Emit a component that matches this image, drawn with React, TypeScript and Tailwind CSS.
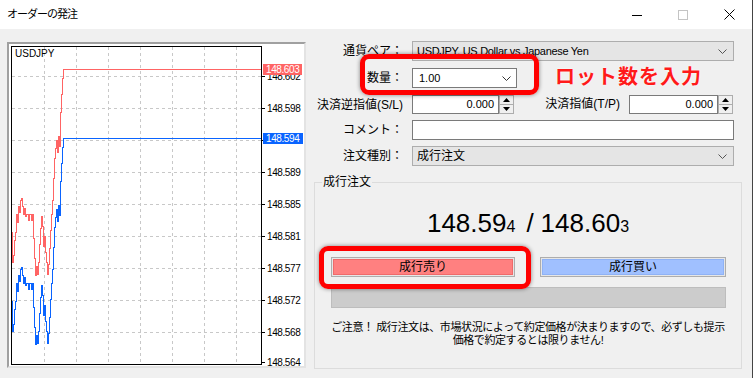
import React from "react";

type Pt = [number, number];

// tick-chart steps for the ask line; the bid line is the same shape 69px lower
const askSteps: Pt[] = [
  [11.5, 176], [11.5, 232], [12.5, 262], [13.5, 255], [14.5, 240], [15.5, 232],
  [16.5, 214], [17.5, 222], [18.5, 206], [19.5, 212], [20.5, 200], [21.5, 198],
  [22.5, 206], [23.5, 214], [24.5, 208], [25.5, 216], [26.5, 214], [28.5, 220],
  [29.5, 214], [31.5, 220], [32.5, 214], [33.5, 238], [34.5, 258], [35.5, 275],
  [36.5, 266], [37.5, 274], [38.5, 262], [39.5, 244], [40.5, 228], [41.5, 216],
  [42.5, 226], [43.5, 246], [44.5, 236], [45.5, 252], [46.5, 262], [47.5, 274],
  [48.5, 264], [49.5, 248], [50.5, 230], [51.5, 214], [52.5, 200], [53.5, 178],
  [54.5, 158], [55.5, 148], [56.5, 140], [57.5, 152], [58.5, 136], [59.5, 146],
  [60.5, 112], [61.5, 94], [62.5, 78], [63.5, 69.5],
];

function stepPath(steps: Pt[], dy: number) {
  let d = `M${steps[0][0]} ${steps[0][1] + dy}`;
  for (let i = 1; i < steps.length; i++) {
    d += ` H${steps[i][0]} V${steps[i][1] + dy}`;
  }
  return d + " H261";
}

const axis = [
  [76, "148.602"], [108, "148.598"], [140, "148.594"], [172, "148.589"],
  [204, "148.585"], [236, "148.581"], [268, "148.577"], [300, "148.572"],
  [332, "148.568"], [362, "148.564"],
] as const;

function Chart() {
  const vx = [44, 76, 108, 140, 172, 204, 236];
  const hy = [76, 108, 140, 172, 204, 236, 268, 300, 332];
  return (
    <svg width={295} height={322} viewBox="9 44 295 322" className="block">
      {vx.map((x) => (
        <line key={x} x1={x + 0.5} y1={47} x2={x + 0.5} y2={364} stroke="#c8c8c8" strokeDasharray="3 3" />
      ))}
      {hy.map((y) => (
        <line key={y} x1={12} y1={y + 0.5} x2={264} y2={y + 0.5} stroke="#c8c8c8" strokeDasharray="3 3" />
      ))}
      <path d={stepPath(askSteps, 0)} fill="none" stroke="#ff6464" shapeRendering="crispEdges" />
      <path d={stepPath(askSteps, 69)} fill="none" stroke="#0a64ff" shapeRendering="crispEdges" />
      <path d="M11.5 46.5 V364.5 H261.5 V46.5" fill="none" stroke="#000" shapeRendering="crispEdges" />
      <line x1={11} y1={46.5} x2={262} y2={46.5} stroke="#000" />
      {axis.map(([y, t]) => (
        <g key={t}>
          <line x1={262} y1={y + 0.5} x2={265} y2={y + 0.5} stroke="#000" />
          <text x={267} y={y + 3.5} fontSize={10} letterSpacing={-0.4} fontFamily="Liberation Sans, sans-serif" fill="#000">
            {t}
          </text>
        </g>
      ))}
      <text x={15} y={57} fontSize={10} fontFamily="Liberation Sans, sans-serif" fill="#000">
        USDJPY
      </text>
      <rect x={263} y={64} width={39} height={11} fill="#ff6464" />
      <text x={266} y={73} fontSize={10} letterSpacing={-0.4} fontFamily="Liberation Sans, sans-serif" fill="#fff">
        148.603
      </text>
      <rect x={263} y={133} width={40} height={11} fill="#0a64ff" />
      <text x={266} y={142} fontSize={10} letterSpacing={-0.4} fontFamily="Liberation Sans, sans-serif" fill="#fff">
        148.594
      </text>
    </svg>
  );
}

function Chevron({ color = "#333" }: { color?: string }) {
  return (
    <svg width="9" height="5" viewBox="0 0 9 5">
      <path d="M0.5 0.5 L4.5 4.5 L8.5 0.5" fill="none" stroke={color} />
    </svg>
  );
}

function Spinner() {
  return (
    <div className="flex h-full w-[15px] flex-col border border-[#adadad] bg-[#f0f0f0]">
      <div className="flex flex-1 items-center justify-center border-b border-[#adadad]">
        <svg width="7" height="4" viewBox="0 0 7 4"><path d="M3.5 0 L7 4 H0 Z" fill="#000" /></svg>
      </div>
      <div className="flex flex-1 items-center justify-center">
        <svg width="7" height="4" viewBox="0 0 7 4"><path d="M0 0 H7 L3.5 4 Z" fill="#000" /></svg>
      </div>
    </div>
  );
}

function Label({ children }: { children: React.ReactNode }) {
  return <div className="w-[89px] shrink-0 text-right text-[12px] leading-[20px] whitespace-nowrap">{children}</div>;
}

export default function App() {
  return (
    <div className="relative h-[378px] w-[753px] overflow-hidden border-r border-[#444] bg-[#f0f0f0] font-['Liberation_Sans','Noto_Sans_CJK_JP',sans-serif] text-black">
      {/* title bar */}
      <div className="flex h-[29px] items-center bg-white">
        <span className="pl-[7px] text-[11px] tracking-[-1px]">オーダーの発注</span>
        <div className="ml-auto flex h-full">
          <div className="flex w-[46px] items-center justify-center">
            <svg width="10" height="10" viewBox="0 0 10 10"><path d="M0 5.5 H10" stroke="#000" /></svg>
          </div>
          <div className="flex w-[46px] items-center justify-center">
            <svg width="10" height="10" viewBox="0 0 10 10"><rect x="0.5" y="0.5" width="9" height="9" fill="none" stroke="#c4c4c4" /></svg>
          </div>
          <div className="flex w-[46px] items-center justify-center">
            <svg width="11" height="11" viewBox="0 0 11 11"><path d="M0.5 0.5 L10.5 10.5 M10.5 0.5 L0.5 10.5" stroke="#000" /></svg>
          </div>
        </div>
      </div>

      <div className="flex">
        {/* chart */}
        <div className="ml-[7px] mt-[13px] h-[326px] w-[299px] border-2 border-[#a0a0a0] border-r-[#e3e3e3] border-b-[#e3e3e3] bg-white">
          <Chart />
        </div>

        {/* order form */}
        <div className="ml-[8px] flex w-[428px] flex-col">
          <div className="mt-[12px] flex h-[20px] items-center">
            <Label>通貨ペア：</Label>
            <div className="ml-[9px] flex h-full w-[322px] items-center justify-between border border-[#adadad] bg-[#e5e5e5] pl-[4px] pr-[6px] text-[11px] tracking-[-0.3px]">
              <span>USDJPY, US Dollar vs Japanese Yen</span>
              <Chevron color="#555" />
            </div>
          </div>

          <div className="mt-[7px] flex h-[20px] items-center">
            <Label>数量：</Label>
            <div className="ml-[9px] flex h-full w-[105px] items-center justify-between border border-[#7a7a7a] bg-white pl-[6px] pr-[5px] text-[11px]">
              <span>1.00</span>
              <Chevron />
            </div>
          </div>

          <div className="mt-[7px] flex h-[19px] items-center">
            <Label>決済逆指値(S/L)</Label>
            <div className="ml-[9px] flex h-full w-[87px] items-center justify-end border border-[#7a7a7a] bg-white pr-[4px] text-[11px]">0.000</div>
            <Spinner />
            <div className="w-[106px] text-right text-[12px] leading-[19px] whitespace-nowrap">決済指値(T/P)</div>
            <div className="ml-[9px] flex h-full w-[89px] items-center justify-end border border-[#7a7a7a] bg-white pr-[4px] text-[11px]">0.000</div>
            <Spinner />
          </div>

          <div className="mt-[6px] flex h-[20px] items-center">
            <Label>コメント：</Label>
            <div className="ml-[9px] h-full w-[322px] border border-[#7a7a7a] bg-white" />
          </div>

          <div className="mt-[6px] flex h-[20px] items-center">
            <Label>注文種別：</Label>
            <div className="ml-[9px] flex h-full w-[322px] items-center justify-between border border-[#adadad] bg-[#e5e5e5] pl-[4px] pr-[6px] text-[12px]">
              <span>成行注文</span>
              <Chevron color="#555" />
            </div>
          </div>

          <fieldset className="mt-[9px] h-[194px] w-[428px] border border-[#dcdcdc]">
            <legend className="ml-[7px] px-[1px] text-[12px] leading-[14px]">成行注文</legend>
            <div className="mt-[17px] flex h-[34px] items-baseline justify-center text-[26px] leading-[34px]">
              <span>148.59</span>
              <span className="text-[16px]">4</span>
              <span className="ml-[11px] mr-[7px]">/</span>
              <span>148.60</span>
              <span className="text-[16px]">3</span>
            </div>
            <div className="mt-[17px] flex pl-[16px]">
              <div className="h-[20px] w-[184px] border border-[#adadad] bg-[#e6e6e6] p-[1px]">
                <div className="flex h-full items-center justify-center border border-[#f06a6a] bg-[#ff8080] text-[12px]">成行売り</div>
              </div>
              <div className="ml-[25px] h-[20px] w-[186px] border border-[#adadad] bg-[#e6e6e6] p-[1px]">
                <div className="flex h-full items-center justify-center border border-[#8fb2f5] bg-[#a0c0ff] text-[12px]">成行買い</div>
              </div>
            </div>
            <div className="ml-[16px] mt-[10px] h-[21px] w-[395px] border border-[#bdbdbd] bg-[#cccccc]" />
            <div className="mt-[13px] text-center text-[11px] leading-[13px] tracking-[-0.4px]">
              ご注意！ 成行注文は、市場状況によって約定価格が決まりますので、必ずしも提示
              <br />
              価格で約定するとは限りません!
            </div>
          </fieldset>
        </div>
      </div>

      {/* annotations */}
      <div className="absolute left-[360px] top-[54px] h-[41px] w-[179px] rounded-[9px] border-[5px] border-[#ff0000] shadow-[0_0_4px_rgba(0,0,0,0.45)]" />
      <div className="absolute left-[319px] top-[246px] h-[43px] w-[212px] rounded-[9px] border-[5px] border-[#ff0000] shadow-[0_0_4px_rgba(0,0,0,0.45)]" />
      <div className="absolute left-[555px] top-[63px] text-[20px] font-bold leading-[28px] tracking-[1px] text-[#ff1a1a] [text-shadow:0_0_2px_#fff]">
        ロット数を入力
      </div>
    </div>
  );
}
